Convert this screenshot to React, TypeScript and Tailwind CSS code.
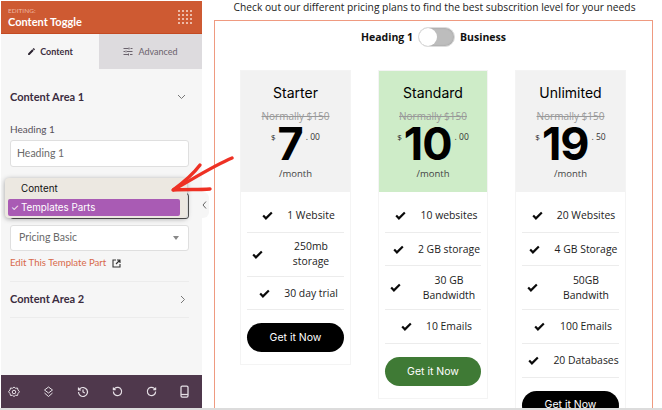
import React from "react";

const sans = "font-['Open_Sans',sans-serif]";

function Check() {
  return (
    <svg width="11" height="9" viewBox="0 0 14 11" preserveAspectRatio="none" className="shrink-0">
      <path d="M1.500 5.500 L5 9 L12.500 1.800" fill="none" stroke="#0a0a0a" strokeWidth="2.800" />
    </svg>
  );
}

function Feature({ text, slot, tall = false }: { text: React.ReactNode; slot: string; tall?: boolean }) {
  return (
    <div className={`mx-[6px] border-b-[1.500px] border-[#ececec] flex items-center ${tall ? "h-[44px]" : "h-[33.700px]"}`}>
      <div className={`w-[31px] shrink-0 flex justify-end ${slot}`}>
        <Check />
      </div>
      <div className="w-[66px] shrink-0 text-[10.400px] leading-[15px] text-center text-[#222] whitespace-nowrap">{text}</div>
    </div>
  );
}

function Card({
  name, dollars, cents, head, btn, features, w,
}: {
  name: string; dollars: string; cents: string; head: string; btn: string; features: React.ReactNode; w: string;
}) {
  return (
    <div className={`${w} self-start shrink-0 border border-[#f4f4f4] bg-white pb-3`}>
      <div className={`h-[121px] flex flex-col items-center pt-[10px] ${head}`}>
        <div className="font-['Inter',sans-serif] text-[14px] leading-[24px] text-black">{name}</div>
        <div className="mt-[3px] text-[10px] leading-[16px] text-[#999] line-through">Normally $150</div>
        <div className="flex items-start h-[38px] mt-[1px]">
          <span className="text-[8px] leading-[10px] mt-[7px] mr-[2px] text-[#222]">$</span>
          <span className="font-['Inter',sans-serif] font-bold text-[45px] leading-[38px] tracking-[-1px] text-black">{dollars}</span>
          <span className="text-[8.500px] leading-[10px] mt-[7px] ml-[3px] text-[#333]">. {cents}</span>
        </div>
        <div className="mt-[4px] text-[9.500px] leading-[14px] text-[#444]">/month</div>
      </div>
      <div className="pt-[7px]">{features}</div>
      <div className={`mx-[6px] mt-[13px] h-[29px] rounded-full flex items-center justify-center font-['Inter',sans-serif] text-[10.500px] text-white ${btn}`}>
        Get it Now
      </div>
    </div>
  );
}

export default function App() {
  return (
    <div className={`relative w-[662px] h-[410px] overflow-hidden bg-white flex ${sans}`}>
      {/* Sidebar */}
      <div className="w-[202px] shrink-0 pl-[1px] pt-[1px] pb-[2px] flex flex-col font-['Lato',sans-serif]">
        <div className="flex-1 flex flex-col bg-[#f6f6f6]">
          <div className="h-[33px] shrink-0 bg-[#ce5a32] border-b border-[#c34a22] flex items-center justify-between pl-[7px] pr-[10px]">
            <div>
              <div className="text-[6.500px] leading-[8px] text-[#eeb8a3]">EDITING:</div>
              <div className="text-[11px] leading-[13px] font-bold text-white">Content Toggle</div>
            </div>
            <div className="grid grid-cols-4 gap-[2.200px]">
              {Array.from({ length: 16 }).map((_, i) => (
                <div key={i} className="w-[1.800px] h-[1.800px] rounded-full bg-[#f7ddd2]" />
              ))}
            </div>
          </div>
          <div className="flex h-[35px] shrink-0 text-[9px]">
            <div className="w-[98px] bg-[#f6f6f6] flex items-center justify-center gap-[4px] text-[#3d2f40] font-bold">
              <svg width="9" height="9" viewBox="0 0 24 24" fill="#2b2330">
                <path d="M3 17.250V21h3.750L17.800 9.950l-3.750-3.750L3 17.250zM20.700 7.040a1 1 0 0 0 0-1.410l-2.330-2.340a1 1 0 0 0-1.410 0l-1.830 1.830 3.750 3.750 1.820-1.830z" />
              </svg>
              Content
            </div>
            <div className="flex-1 bg-[#dddbde] flex items-center justify-center gap-[5px] text-[#6a626c]">
              <svg width="10" height="9" viewBox="0 0 20 18" fill="none" stroke="#6a626c" strokeWidth="2">
                <path d="M1 3h10M15 3h4M1 9h3M8 9h11M1 15h9M14 15h5M12 1v4M6 7v4M11 13v4" />
              </svg>
              Advanced
            </div>
          </div>
          <div className="pl-[9px] pr-[13px] flex-1 flex flex-col">
            <div className="h-[54px] shrink-0 pt-[2px] flex items-center justify-between pr-[3px] text-[11px] font-bold text-[#3b2c40]">
              Content Area 1
              <svg width="9" height="6" viewBox="0 0 9 6" fill="none" stroke="#777" strokeWidth="1"><path d="M1 1l3.500 3.500L8 1" /></svg>
            </div>
            <div className="text-[10px] leading-[12px] text-[#56505a]">Heading 1</div>
            <div className="mt-[5px] h-[27px] rounded-[3px] border border-[#dfdfdf] bg-white flex items-center pl-[6px] text-[10.500px] text-[#6a6a6a]">
              Heading 1
            </div>
            <div className="mt-[26px] h-[26px] rounded-[3px] border border-[#555] bg-white" />
            <div className="mt-[6px] h-[26px] rounded-[3px] border border-[#dfdfdf] bg-white flex items-center justify-between pl-[8px] pr-[9px] text-[10.500px] text-[#6a6a6a]">
              Pricing Basic
              <div className="w-0 h-0 border-x-[3.500px] border-x-transparent border-t-[4px] border-t-[#888]" />
            </div>
            <div className="mt-[6px] flex items-center gap-[6px] text-[9.600px] leading-[12px] text-[#d8694a]">
              Edit This Template Part
              <svg width="9" height="9" viewBox="0 0 9 9" fill="none" stroke="#333" strokeWidth="1.100">
                <path d="M4 1H1v7h7V5M5 1h3v3M8 1L4 5" />
              </svg>
            </div>
            <div className="mt-[12px] border-t border-[#ececec]" />
            <div className="h-[35px] flex items-center justify-between pr-[3px] text-[11px] font-bold text-[#3b2c40]">
              Content Area 2
              <svg width="6" height="9" viewBox="0 0 6 9" fill="none" stroke="#777" strokeWidth="1"><path d="M1 1l3.500 3.500L1 8" /></svg>
            </div>
            <div className="border-t border-[#ececec]" />
          </div>
          <div className="h-[33px] shrink-0 bg-[#4f384c] flex items-center justify-between pl-[7px] pr-[13px]">
            <svg width="12" height="12" viewBox="0 0 24 24" fill="none" stroke="#e6e0e6" strokeWidth="2"><path d="M12 2l3 2.500 4-.5 1 4 3 3.500-3 3.500-1 4-4-.5-3 2.500-3-2.500-4 .5-1-4-3-3.500 3-3.500 1-4 4 .5z" /><circle cx="12" cy="12" r="3.500" /></svg>
            <svg width="11" height="12" viewBox="0 0 22 24" fill="none" stroke="#e6e0e6" strokeWidth="2"><path d="M11 2l8 6-8 6-8-6zM3 14l8 7 8-7" /></svg>
            <svg width="12" height="12" viewBox="0 0 24 24" fill="none" stroke="#e6e0e6" strokeWidth="2.400"><path d="M3 12a9 9 0 1 0 3-6.700L3 8M3 3v5h5M12 7v5l3.500 2" /></svg>
            <svg width="11" height="11" viewBox="0 0 24 24" fill="none" stroke="#e6e0e6" strokeWidth="2.600"><path d="M3 12a9 9 0 1 0 3-6.700L3 8M3 3v5h5" /></svg>
            <svg width="11" height="11" viewBox="0 0 24 24" fill="none" stroke="#e6e0e6" strokeWidth="2.600"><path d="M21 12a9 9 0 1 1-3-6.700L21 8M21 3v5h-5" /></svg>
            <svg width="9" height="13" viewBox="0 0 18 26" fill="none" stroke="#e6e0e6" strokeWidth="2.500"><rect x="2" y="2" width="14" height="22" rx="2.500" /><path d="M2 19h14" /></svg>
          </div>
        </div>
      </div>

      {/* Preview */}
      <div className="flex-1 min-w-0 pr-[9px] flex flex-col pb-[2px]">
        <div className="h-[20px] shrink-0 pl-[14px] pt-[1px] flex justify-center text-[10.250px] leading-[13px] text-[#222] whitespace-nowrap">
          Check out our different pricing plans to find the best subscrition level for your needs
        </div>
        <div className="ml-[12px] flex-1 min-h-0 border-x-[1.500px] border-t-[1.500px] border-[#ef9a80] flex flex-col overflow-hidden">
          <div className="h-[49px] shrink-0 flex items-start justify-center pt-[6px] gap-[5px] text-[10.500px] font-bold text-[#111]">
            <span className="leading-[21px]">Heading 1</span>
            <div className="w-[37px] h-[20px] rounded-full bg-[#bdbdbd] border border-[#ddd] shadow-[inset_0_0_2px_#999] flex">
              <div className="w-[18px] h-[18px] rounded-full bg-white" />
            </div>
            <span className="leading-[21px]">Business</span>
          </div>
          <div className="flex-1 pl-[25px] flex gap-[27px]">
            <Card
              w="w-[111px]" name="Starter" dollars="7" cents="00" head="bg-[#f2f2f2]" btn="bg-black"
              features={<>
                <Feature text="1 Website" slot="pr-[5px]" />
                <Feature tall text={<>250mb<br />storage</>} slot="pr-[15px]" />
                <Feature text="30 day trial" slot="pr-[8px]" />
              </>}
            />
            <Card
              w="w-[110px]" name="Standard" dollars="10" cents="00" head="bg-[#ceecc8]" btn="bg-[#3f7a35]"
              features={<>
                <Feature text="10 websites" slot="pr-[10px]" />
                <Feature text="2 GB storage" slot="pr-[12px]" />
                <Feature tall text={<>30 GB<br />Bandwidth</>} slot="pr-[15px]" />
                <Feature text="10 Emails" slot="pr-[4px]" />
              </>}
            />
            <Card
              w="w-[111px]" name="Unlimited" dollars="19" cents="50" head="bg-[#f2f2f2]" btn="bg-black"
              features={<>
                <Feature text="20 Websites" slot="pr-[10px]" />
                <Feature text="4 GB Storage" slot="pr-[13px]" />
                <Feature tall text={<>50GB<br />Bandwith</>} slot="pr-[15px]" />
                <Feature text="100 Emails" slot="pr-[8px]" />
                <Feature text="20 Databases" slot="pr-[14px]" />
              </>}
            />
          </div>
        </div>
      </div>

      <div className="absolute left-0 right-0 bottom-0 h-[2px] bg-[#dcdcdc]" />

      {/* Collapse handle */}
      <div className="absolute left-[199px] top-[192px] w-[10px] h-[26px] rounded-r-[6px] bg-[#f6f6f6] flex items-center justify-center">
        <svg width="5" height="8" viewBox="0 0 5 8" fill="none" stroke="#666" strokeWidth="1"><path d="M4 0.500L1 4l3 3.500" /></svg>
      </div>

      {/* Select popup */}
      <div className="absolute left-[5px] top-[178px] w-[182px] h-[40px] rounded-[4px] bg-[#ece8e1] shadow-[0_1px_5px_rgba(0,0,0,0.35)] pl-[3px] pr-[7px] pt-[4px] font-['Inter',sans-serif] text-[9.800px] leading-[14px]">
        <div className="pl-[13px] h-[17px] text-[#111]">Content</div>
        <div className="h-[17px] rounded-[2px] bg-[#a95bb4] pl-[3px] text-white flex items-center gap-[2px]">
          <span className="text-[9px]">✓</span>Templates Parts
        </div>
      </div>

      {/* Red arrow */}
      <svg className="absolute left-[168px] top-[154px]" width="66" height="40" viewBox="0 0 66 40" fill="none" stroke="#ee3124" strokeWidth="3.400" strokeLinecap="round">
        <path d="M64 4C45 12 25 25 5 36C20 35 30 36 42 35" />
        <path d="M32 11C26 19 16 28 5 36" />
      </svg>
    </div>
  );
}
